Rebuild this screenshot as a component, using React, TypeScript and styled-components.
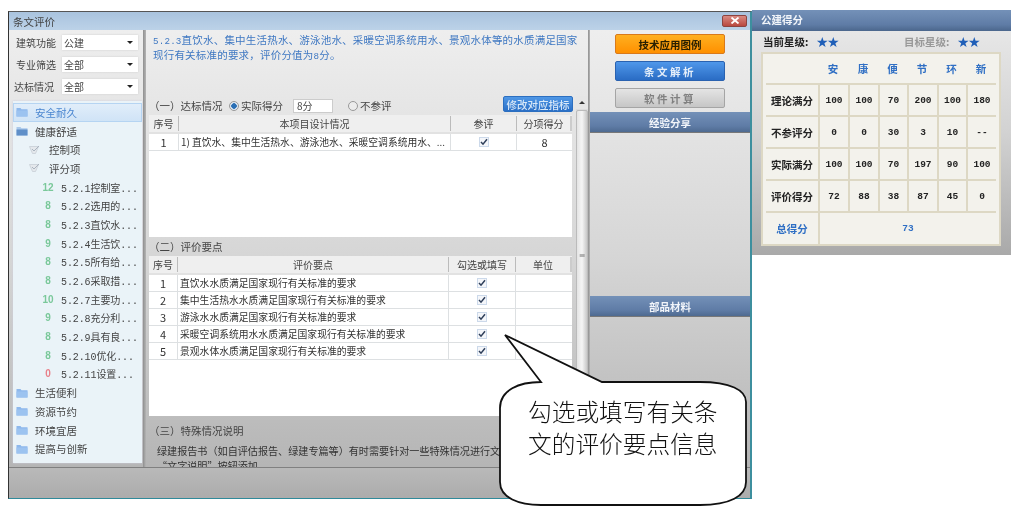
import React from "react";
import styled, { createGlobalStyle } from "styled-components";

const CJK = `"Noto Sans CJK SC", "Liberation Sans", sans-serif`;
const MONO = `"Liberation Mono", "Noto Sans CJK SC", monospace`;

const Global = createGlobalStyle`
  html, body { margin: 0; padding: 0; background: #fff; }
  body { font-family: ${CJK}; font-size: 10.5px; color: #333; }
  * { box-sizing: border-box; }
`;

const Page = styled.div`
  position: relative;
  width: 1020px;
  height: 510px;
  overflow: hidden;
  background: #fff;
  display: flex;
  align-items: flex-start;
  padding: 10px 0 0 8px;
  filter: blur(0.35px);
`;

const Win = styled.div`
  width: 744px;
  height: 488px;
  margin-top: 1px;
  display: flex;
  flex-direction: column;
  border-top: 1px solid #555;
  border-left: 1px solid #333;
  border-right: 2px solid #3d8f9e;
  border-bottom: 1px solid #2f8a9a;
  background: linear-gradient(180deg, #f0f0f0 0%, #d6d6d6 50%, #b0b0b0 100%);
`;

const TitleBar = styled.div`
  height: 18px;
  flex: none;
  display: flex;
  align-items: center;
  justify-content: space-between;
  padding: 0 3px 0 4px;
  background: linear-gradient(180deg, #a9c3de 0%, #bcd2e8 100%);
  font-size: 10.5px;
  color: #444;
`;

const CloseBtn = styled.div`
  width: 25px;
  height: 12px;
  margin-top: -1px;
  display: flex;
  align-items: center;
  justify-content: center;
  border: 1px solid #8c4440;
  border-radius: 2px;
  background: linear-gradient(180deg, #d98a82 0%, #b9483f 100%);
`;

const Main = styled.div`
  flex: 1;
  min-height: 0;
  display: flex;
`;

const LeftCol = styled.div`
  width: 134px;
  flex: none;
  display: flex;
  flex-direction: column;
  padding: 1px 1px 4px 4px;
`;

const FilterRow = styled.div<{ $labelPad: number; $h: number }>`
  height: ${(p) => p.$h}px;
  flex: none;
  display: flex;
  align-items: center;
  padding-left: ${(p) => p.$labelPad}px;
  font-size: 10px;
  color: #444;
  white-space: nowrap;
`;

const FilterLabel = styled.span`
  width: 44px;
  flex: none;
`;

const SelectBox = styled.div<{ $w: number }>`
  width: ${(p) => p.$w}px;
  height: 15px;
  margin-left: auto;
  margin-right: 4px;
  display: flex;
  align-items: center;
  justify-content: space-between;
  padding: 0 5px 0 2px;
  background: #fff;
  box-shadow: 0 0 2px #ccc;
  font-size: 10px;
  color: #444;
`;

const Caret = styled.span`
  width: 0;
  height: 0;
  border: 3px solid transparent;
  border-top: 3px solid #222;
  border-bottom: 0;
`;

const Tree = styled.div`
  margin-top: 4px;
  width: 129px;
  height: 362px;
  background: #eaf3f8;
  box-shadow: 0 0 2px #ccd;
  padding-top: 2px;
  display: flex;
  flex-direction: column;
`;

const TreeRow = styled.div<{ $selected?: boolean; $level: number }>`
  height: 18.7px;
  flex: none;
  display: flex;
  align-items: center;
  padding-left: ${(p) => [3, 16, 28][p.$level]}px;
  gap: ${(p) => [7, 8, 6][p.$level]}px;
  font-size: ${(p) => (p.$level === 2 ? 10 : 10.5)}px;
  letter-spacing: ${(p) => (p.$level === 2 ? "-0.1px" : "0")};
  font-family: ${(p) => (p.$level === 2 ? MONO : CJK)};
  color: ${(p) => (p.$selected ? "#4a86d0" : "#444")};
  white-space: nowrap;
  ${(p) =>
    p.$selected
      ? `background: linear-gradient(180deg,#e2eefa,#cfe3f6); outline: 1px solid #b5d4f2; outline-offset: -1px;`
      : ""}
`;

const ScoreNum = styled.span<{ $zero?: boolean }>`
  width: 14px;
  flex: none;
  text-align: center;
  font-family: "Liberation Sans", sans-serif;
  font-size: 10px;
  font-weight: 700;
  color: ${(p) => (p.$zero ? "#e8808a" : "#7ac89a")};
`;

const VDivider = styled.div<{ $w: number }>`
  width: ${(p) => p.$w}px;
  flex: none;
  background: linear-gradient(90deg, #8f8f8f, #b5b5b5);
`;

const MidCol = styled.div`
  width: 442px;
  flex: none;
  display: flex;
  flex-direction: column;
  min-height: 0;
  overflow: hidden;
`;

const Heading = styled.div`
  height: 66px;
  flex: none;
  padding: 2px 0 0 7px;
  font-size: 10.5px;
  line-height: 15px;
  letter-spacing: 0.2px;
  color: #3f78c2;
`;

const HeadLine = styled.div`
  height: 15px;
  white-space: nowrap;
`;

const NumText = styled.span`
  font-family: ${MONO};
  font-size: 9.2px;
  line-height: 1;
`;

const MidBody = styled.div`
  flex: 1;
  min-height: 0;
  display: flex;
`;

const Content = styled.div`
  width: 429px;
  flex: none;
  display: flex;
  flex-direction: column;
  padding-left: 3px;
`;

const StatusRow = styled.div`
  height: 19px;
  flex: none;
  display: flex;
  align-items: center;
  white-space: nowrap;
  font-size: 10.5px;
  color: #444;
`;

const SectionLabel = styled.span`
  width: 80px;
  flex: none;
`;

const Radio = styled.span<{ $on?: boolean }>`
  width: 10px;
  height: 10px;
  flex: none;
  border-radius: 50%;
  border: 1px solid #999;
  background: ${(p) =>
    p.$on ? "radial-gradient(circle,#2a6fb5 0 2.5px,#dfe8f2 3px)" : "#ececec"};
  margin-right: 2px;
`;

const ScoreInput = styled.div`
  width: 40px;
  height: 14px;
  margin: 0 15px 0 10px;
  background: #fff;
  border: 1px solid #ccc;
  display: flex;
  align-items: center;
  padding-left: 3px;
  font-size: 10px;
`;

const ModifyBtn = styled.div`
  width: 70px;
  height: 16px;
  margin-left: auto;
  margin-right: 2px;
  margin-top: -3px;
  border-radius: 2px;
  border: 1px solid #2c6fc0;
  background: linear-gradient(180deg, #4f97e6, #2a6fc6);
  color: #d8e8f8;
  font-size: 10.5px;
  font-weight: 500;
  display: flex;
  align-items: center;
  justify-content: center;
`;

const TablePane = styled.div<{ $h: number }>`
  width: 423px;
  height: ${(p) => p.$h}px;
  flex: none;
  background: #fff;
`;

const HeadRow = styled.div<{ $cols: string }>`
  height: 19px;
  display: grid;
  grid-template-columns: ${(p) => p.$cols};
  background: #efefef;
  border-bottom: 2px solid #e2e2e2;
`;

const HeadCell = styled.div`
  display: flex;
  align-items: center;
  justify-content: center;
  font-size: 10px;
  color: #444;
  border-right: 1px solid #bbb;
  margin: 1px 0;
  &:last-child {
    border-right: 2px solid #ccc;
  }
`;

const BodyRow = styled.div<{ $cols: string }>`
  height: 17.1px;
  display: grid;
  grid-template-columns: ${(p) => p.$cols};
  border-bottom: 1px solid #dde0e2;
`;

const Cell = styled.div<{ $left?: boolean; $num?: boolean }>`
  display: flex;
  align-items: center;
  justify-content: ${(p) => (p.$left ? "flex-start" : "center")};
  padding-left: ${(p) => (p.$left ? "2px" : "0")};
  border-right: 1px solid #dde0e2;
  font-size: ${(p) => (p.$num ? "11px" : "9.8px")};
  color: #333;
  white-space: nowrap;
  overflow: hidden;
  &:last-child {
    border-right: 0;
  }
`;

const Sec2Label = styled.div`
  height: 19px;
  flex: none;
  padding-top: 3px;
  font-size: 10.5px;
  line-height: 14px;
  color: #444;
`;

const Sec3 = styled.div`
  flex: 1;
  padding-top: 8px;
  font-size: 10.5px;
  color: #444;
  line-height: 14px;
`;

const Sec3Text = styled.div`
  margin: 5px 0 0 8px;
  width: 500px;
  font-size: 10.1px;
  line-height: 15px;
  color: #333;
`;

const ScrollBar = styled.div`
  width: 12px;
  flex: none;
  margin-left: 1px;
  display: flex;
  flex-direction: column;
  background: #dcdcdc;
`;

const ScrollUp = styled.div`
  height: 13px;
  flex: none;
  background: #e6e6e6;
  display: flex;
  align-items: center;
  justify-content: center;
`;

const UpCaret = styled.span`
  width: 0;
  height: 0;
  border: 3px solid transparent;
  border-bottom: 3px solid #333;
  border-top: 0;
`;

const ScrollThumb = styled.div`
  margin-top: 1px;
  height: 290px;
  background: linear-gradient(90deg, #e4e4e4, #f5f5f5 50%, #c8c8c8);
  border: 1px solid #bbb;
  border-radius: 2px;
  display: flex;
  align-items: center;
  justify-content: center;
  font-size: 8px;
  color: #777;
  font-family: "DejaVu Sans", sans-serif;
  overflow: hidden;
`;

const RightCol = styled.div`
  flex: 1;
  min-width: 0;
  display: flex;
  flex-direction: column;
`;

const BtnStack = styled.div`
  height: 82px;
  flex: none;
  padding-top: 4px;
  display: flex;
  flex-direction: column;
  align-items: center;
  gap: 7px;
`;

const ActionBtn = styled.div<{ $kind: "orange" | "blue" | "grey" }>`
  width: 110px;
  height: 20px;
  flex: none;
  border-radius: 2px;
  display: flex;
  align-items: center;
  justify-content: center;
  font-size: 10.5px;
  font-weight: 700;
  letter-spacing: ${(p) => (p.$kind === "orange" ? "0" : "2.5px")};
  border: 1px solid
    ${(p) => ({ orange: "#d9791a", blue: "#2a62b0", grey: "#a5a5a5" }[p.$kind])};
  color: ${(p) => ({ orange: "#2a2000", blue: "#e4eefa", grey: "#808080" }[p.$kind])};
  background: ${(p) =>
    ({
      orange: "linear-gradient(180deg,#ffb020,#ff9000)",
      blue: "linear-gradient(180deg,#4f97ea,#2a6cc4)",
      grey: "linear-gradient(180deg,#e4e4e4,#c6c6c6)",
    }[p.$kind])};
`;

const BlueBar = styled.div`
  height: 21px;
  flex: none;
  display: flex;
  align-items: center;
  justify-content: center;
  background: linear-gradient(180deg, #7491b8 0%, #5f7ca6 70%, #4e6a90 100%);
  border-bottom: 1px solid #777;
  color: #f2f5fa;
  font-size: 10.5px;
  font-weight: 700;
`;

const ShareSpace = styled.div`
  height: 163px;
  flex: none;
`;

const Footer = styled.div`
  height: 31px;
  flex: none;
  border-top: 1px solid #808080;
  background: linear-gradient(180deg, #b9b9b9, #acacac);
`;

const ScorePanel = styled.div`
  width: 259px;
  height: 245px;
  flex: none;
  display: flex;
  flex-direction: column;
  background: linear-gradient(180deg, #ebebeb 0%, #d2d2d2 50%, #a9a9a9 100%);
`;

const ScoreHead = styled.div`
  height: 21px;
  flex: none;
  display: flex;
  align-items: center;
  padding: 0 0 2px 9px;
  background: linear-gradient(180deg, #7491b8 0%, #5f7ca6 70%, #4b668c 100%);
  color: #f2f5fa;
  font-size: 10.5px;
  font-weight: 700;
`;

const StarRow = styled.div`
  height: 21px;
  flex: none;
  display: flex;
  align-items: center;
  padding: 0 0 0 11px;
  font-size: 10.5px;
  font-weight: 700;
  color: #222;
  white-space: nowrap;
`;

const StarLabel = styled.span<{ $muted?: boolean }>`
  width: 53px;
  flex: none;
  color: ${(p) => (p.$muted ? "#999" : "#222")};
  ${(p) => (p.$muted ? "margin-left: 64px;" : "")}
`;

const Stars = styled.span`
  width: 24px;
  flex: none;
  display: flex;
  color: #1f5fb8;
  font-size: 14px;
  letter-spacing: -1.6px;
  font-family: "DejaVu Sans", sans-serif;
  font-weight: 400;
`;

const ScoreTable = styled.div`
  width: 240px;
  height: 194px;
  margin-left: 9px;
  padding: 0 3px;
  display: grid;
  grid-template-columns: 52px 30px 30px 29px 30px 29px 30px;
  grid-template-rows: 29px 32px 32px 32px 32px 33px;
  background: #f3f2ec;
  border: 2px solid #ddd8c4;
`;

const SCell = styled.div<{ $row: number; $first?: boolean; $blue?: boolean; $span?: number; $cjk?: boolean }>`
  display: flex;
  align-items: center;
  justify-content: center;
  grid-column: span ${(p) => p.$span ?? 1};
  font-family: ${(p) => (p.$cjk ? CJK : MONO)};
  font-size: ${(p) => (p.$cjk ? "10.5px" : "9.5px")};
  font-weight: 700;
  color: ${(p) => (p.$blue ? "#2f6fc4" : "#222")};
  ${(p) => (p.$row > 0 ? "border-top: 2px solid #ddd8c4;" : "")}
  ${(p) => (p.$row > 0 && !p.$first ? "border-left: 2px solid #ddd8c4;" : "")}
`;

const Callout = styled.div`
  position: absolute;
  left: 495px;
  top: 330px;
  width: 256px;
  height: 180px;
`;

const CalloutSvg = styled.svg`
  position: absolute;
  inset: 0;
`;

const CalloutText = styled.div`
  position: absolute;
  left: 33px;
  top: 65px;
  width: 200px;
  font-size: 23.7px;
  line-height: 32px;
  font-weight: 300;
  color: #111;
`;

const Folder = ({ open }: { open?: boolean }) => (
  <svg width="12" height="10" viewBox="0 0 12 10">
    <path d="M0.5 1h4l1 1.2h6V9.5H0.5z" fill={open ? "#a9c8ea" : "#8db8ec"} />
    <path d="M0.5 3.5h11V9.5H0.5z" fill={open ? "#5f8fc8" : "#9cc3f0"} />
  </svg>
);

const Tick = () => (
  <svg width="12" height="10" viewBox="0 0 12 10">
    <path d="M0.5 1.5h9l-3 7h-3z" fill="#e4e8ec" stroke="#c8ced6" strokeWidth="0.8" />
    <path d="M3 4l2 2 5-5" fill="none" stroke="#aab4c0" strokeWidth="1" />
  </svg>
);

const Check = () => (
  <svg width="10" height="10" viewBox="0 0 10 10">
    <rect x="0" y="0" width="10" height="10" fill="#ccd9ea" />
    <rect x="1" y="1" width="8" height="8" fill="#f4f6fa" />
    <path d="M2 5l2 2.2L8 2.2" fill="none" stroke="#2f3f5a" strokeWidth="1.5" />
  </svg>
);

const COLS1 = "30px 272px 66px 55px";
const COLS2 = "29px 271px 67px 56px";

const scoreItems: [string, string, boolean?][] = [
  ["12", "5.2.1控制室..."],
  ["8", "5.2.2选用的..."],
  ["8", "5.2.3直饮水..."],
  ["9", "5.2.4生活饮..."],
  ["8", "5.2.5所有给..."],
  ["8", "5.2.6采取措..."],
  ["10", "5.2.7主要功..."],
  ["9", "5.2.8充分利..."],
  ["8", "5.2.9具有良..."],
  ["8", "5.2.10优化..."],
  ["0", "5.2.11设置...", true],
];

const points = [
  "直饮水水质满足国家现行有关标准的要求",
  "集中生活热水水质满足国家现行有关标准的要求",
  "游泳水水质满足国家现行有关标准的要求",
  "采暖空调系统用水水质满足国家现行有关标准的要求",
  "景观水体水质满足国家现行有关标准的要求",
];

const scoreRows: [string, string[]][] = [
  ["理论满分", ["100", "100", "70", "200", "100", "180"]],
  ["不参评分", ["0", "0", "30", "3", "10", "--"]],
  ["实际满分", ["100", "100", "70", "197", "90", "100"]],
  ["评价得分", ["72", "88", "38", "87", "45", "0"]],
];

export default function App() {
  return (
    <Page>
      <Global />
      <Win>
        <TitleBar>
          条文评价
          <CloseBtn>
            <svg width="10" height="7" viewBox="0 0 10 7">
              <path d="M1.5 0.5l7 6M8.5 0.5l-7 6" stroke="#fff" strokeWidth="1.8" />
            </svg>
          </CloseBtn>
        </TitleBar>
        <Main>
          <LeftCol>
            <FilterRow $labelPad={3} $h={22}>
              <FilterLabel>建筑功能</FilterLabel>
              <SelectBox $w={76}>公建<Caret /></SelectBox>
            </FilterRow>
            <FilterRow $labelPad={3} $h={23}>
              <FilterLabel>专业筛选</FilterLabel>
              <SelectBox $w={76}>全部<Caret /></SelectBox>
            </FilterRow>
            <FilterRow $labelPad={1} $h={21}>
              <FilterLabel>达标情况</FilterLabel>
              <SelectBox $w={76}>全部<Caret /></SelectBox>
            </FilterRow>
            <Tree>
              <TreeRow $level={0} $selected><Folder />安全耐久</TreeRow>
              <TreeRow $level={0}><Folder open />健康舒适</TreeRow>
              <TreeRow $level={1}><Tick />控制项</TreeRow>
              <TreeRow $level={1}><Tick />评分项</TreeRow>
              {scoreItems.map(([n, t, z]) => (
                <TreeRow $level={2} key={t}>
                  <ScoreNum $zero={z}>{n}</ScoreNum>
                  {t}
                </TreeRow>
              ))}
              {["生活便利", "资源节约", "环境宜居", "提高与创新"].map((t) => (
                <TreeRow $level={0} key={t}><Folder />{t}</TreeRow>
              ))}
            </Tree>
          </LeftCol>
          <VDivider $w={3} />
          <MidCol>
            <Heading>
              <HeadLine>
                <NumText>5.2.3</NumText>直饮水、集中生活热水、游泳池水、采暖空调系统用水、景观水体等的水质满足国家
              </HeadLine>
              <HeadLine>
                现行有关标准的要求，评价分值为<NumText>8</NumText>分。
              </HeadLine>
            </Heading>
            <MidBody>
              <Content>
                <StatusRow>
                  <SectionLabel>（一）达标情况</SectionLabel>
                  <Radio $on />
                  实际得分
                  <ScoreInput>8分</ScoreInput>
                  <Radio />
                  不参评
                  <ModifyBtn>修改对应指标</ModifyBtn>
                </StatusRow>
                <TablePane $h={122}>
                  <HeadRow $cols={COLS1}>
                    <HeadCell>序号</HeadCell>
                    <HeadCell>本项目设计情况</HeadCell>
                    <HeadCell>参评</HeadCell>
                    <HeadCell>分项得分</HeadCell>
                  </HeadRow>
                  <BodyRow $cols={COLS1}>
                    <Cell $num>1</Cell>
                    <Cell $left>1) 直饮水、集中生活热水、游泳池水、采暖空调系统用水、...</Cell>
                    <Cell><Check /></Cell>
                    <Cell $num>8</Cell>
                  </BodyRow>
                </TablePane>
                <Sec2Label>（二）评价要点</Sec2Label>
                <TablePane $h={160}>
                  <HeadRow $cols={COLS2}>
                    <HeadCell>序号</HeadCell>
                    <HeadCell>评价要点</HeadCell>
                    <HeadCell>勾选或填写</HeadCell>
                    <HeadCell>单位</HeadCell>
                  </HeadRow>
                  {points.map((t, i) => (
                    <BodyRow $cols={COLS2} key={t}>
                      <Cell $num>{i + 1}</Cell>
                      <Cell $left>{t}</Cell>
                      <Cell><Check /></Cell>
                      <Cell />
                    </BodyRow>
                  ))}
                </TablePane>
                <Sec3>
                  （三）特殊情况说明
                  <Sec3Text>
                    绿建报告书（如自评估报告、绿建专篇等）有时需要针对一些特殊情况进行文字说明，
                    <br />
                    “文字说明”按钮添加。
                  </Sec3Text>
                </Sec3>
              </Content>
              <ScrollBar>
                <ScrollUp><UpCaret /></ScrollUp>
                <ScrollThumb>≡</ScrollThumb>
              </ScrollBar>
            </MidBody>
          </MidCol>
          <VDivider $w={2} />
          <RightCol>
            <BtnStack>
              <ActionBtn $kind="orange">技术应用图例</ActionBtn>
              <ActionBtn $kind="blue">条文解析</ActionBtn>
              <ActionBtn $kind="grey">软件计算</ActionBtn>
            </BtnStack>
            <BlueBar>经验分享</BlueBar>
            <ShareSpace />
            <BlueBar>部品材料</BlueBar>
          </RightCol>
        </Main>
        <Footer />
      </Win>
      <ScorePanel>
        <ScoreHead>公建得分</ScoreHead>
        <StarRow>
          <StarLabel>当前星级:</StarLabel>
          <Stars>★★</Stars>
          <StarLabel $muted>目标星级:</StarLabel>
          <Stars>★★</Stars>
        </StarRow>
        <ScoreTable>
          <SCell $row={0} />
          {["安", "康", "便", "节", "环", "新"].map((t) => (
            <SCell $row={0} $cjk $blue key={t}>{t}</SCell>
          ))}
          {scoreRows.map(([label, vals], r) => (
            <React.Fragment key={label}>
              <SCell $row={r + 1} $first $cjk>{label}</SCell>
              {vals.map((v, i) => (
                <SCell $row={r + 1} key={i}>{v}</SCell>
              ))}
            </React.Fragment>
          ))}
          <SCell $row={5} $first $cjk $blue>总得分</SCell>
          <SCell $row={5} $span={6} $blue>73</SCell>
        </ScoreTable>
      </ScorePanel>
      <Callout>
        <CalloutSvg width="256" height="180" viewBox="0 0 256 180">
          <path
            d="M10 5 L46 52 C24 52 5 60 5 78 L5 152 C5 168 24 175 46 175 L205 175 C235 175 251 166 251 152 L251 72 C251 60 235 52 205 52 L107 52 Z"
            fill="#fff"
            stroke="#111"
            strokeWidth="1.8"
            strokeLinejoin="miter"
          />
        </CalloutSvg>
        <CalloutText>勾选或填写有关条文的评价要点信息</CalloutText>
      </Callout>
    </Page>
  );
}
